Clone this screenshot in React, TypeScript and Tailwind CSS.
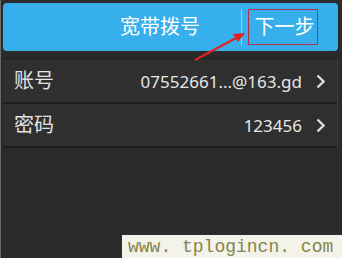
const ROWS = [
  { label: '账号', value: '07552661...@163.gd' },
  { label: '密码', value: '123456' },
]

const cjk = { fontFamily: '"Noto Sans", "Noto Sans CJK SC", sans-serif' }

function Chevron() {
  return (
    <svg className="ml-[14px] shrink-0" width="9" height="15" viewBox="0 0 9 15">
      <polyline points="1.5,1.5 7.5,7.5 1.5,13.5" fill="none" stroke="#dcdcdc" strokeWidth="2.4" />
    </svg>
  )
}

export default function App() {
  return (
    <div className="relative h-[258px] w-[342px] overflow-hidden border-l border-[#6a6a6a] bg-[#2b2b2b]" style={cjk}>
      <div className="px-[2px] pt-[3px] pr-[4px]">
        {/* header bar */}
        <header className="flex h-[48px] items-center rounded-[4px] bg-[#37afec] pr-[20px] text-white">
          <h1 className="ml-[117px] text-[20px] leading-none">宽带拨号</h1>
          <span className="ml-[41px] h-[36px] w-px bg-[#8fd2f3]" />
          <button className="ml-[6px] flex h-[36px] w-[70px] items-center justify-center border border-[#b0304e] pl-[3px] text-[20px] leading-none">
            下一步
          </button>
        </header>

        {/* form rows */}
        <div className="mt-[6px] border-t-[3px] border-r border-[#272727] border-r-[#3c3c3c]">
          {ROWS.map(({ label, value }) => (
            <div
              key={label}
              className="flex h-[44px] items-center border-b-2 border-[#1d1d1d] bg-[#2f2f2f] pl-[11px] pr-[12px]"
            >
              <span className="text-[20px] leading-none text-[#e2e2e2]">{label}</span>
              <span className="ml-auto text-[17px] leading-none text-[#e6e6e6]">{value}</span>
              <Chevron />
            </div>
          ))}
        </div>
      </div>

      {/* annotation arrow */}
      <svg className="absolute left-0 top-0" width="342" height="80" viewBox="0 0 342 80">
        <line x1="194" y1="60" x2="236" y2="37.5" stroke="#e3201e" strokeWidth="2" />
        <polygon points="244,33 232,34 237,42" fill="#e3201e" />
      </svg>

      {/* watermark */}
      <div
        className="absolute bottom-0 right-0 flex h-[23px] w-[220px] items-center bg-[#f3f3ea] pl-[6px] text-[18px] leading-none text-[#85854a]"
        style={{ fontFamily: '"Liberation Mono", monospace' }}
      >
        www. tplogincn. com
      </div>
    </div>
  )
}
